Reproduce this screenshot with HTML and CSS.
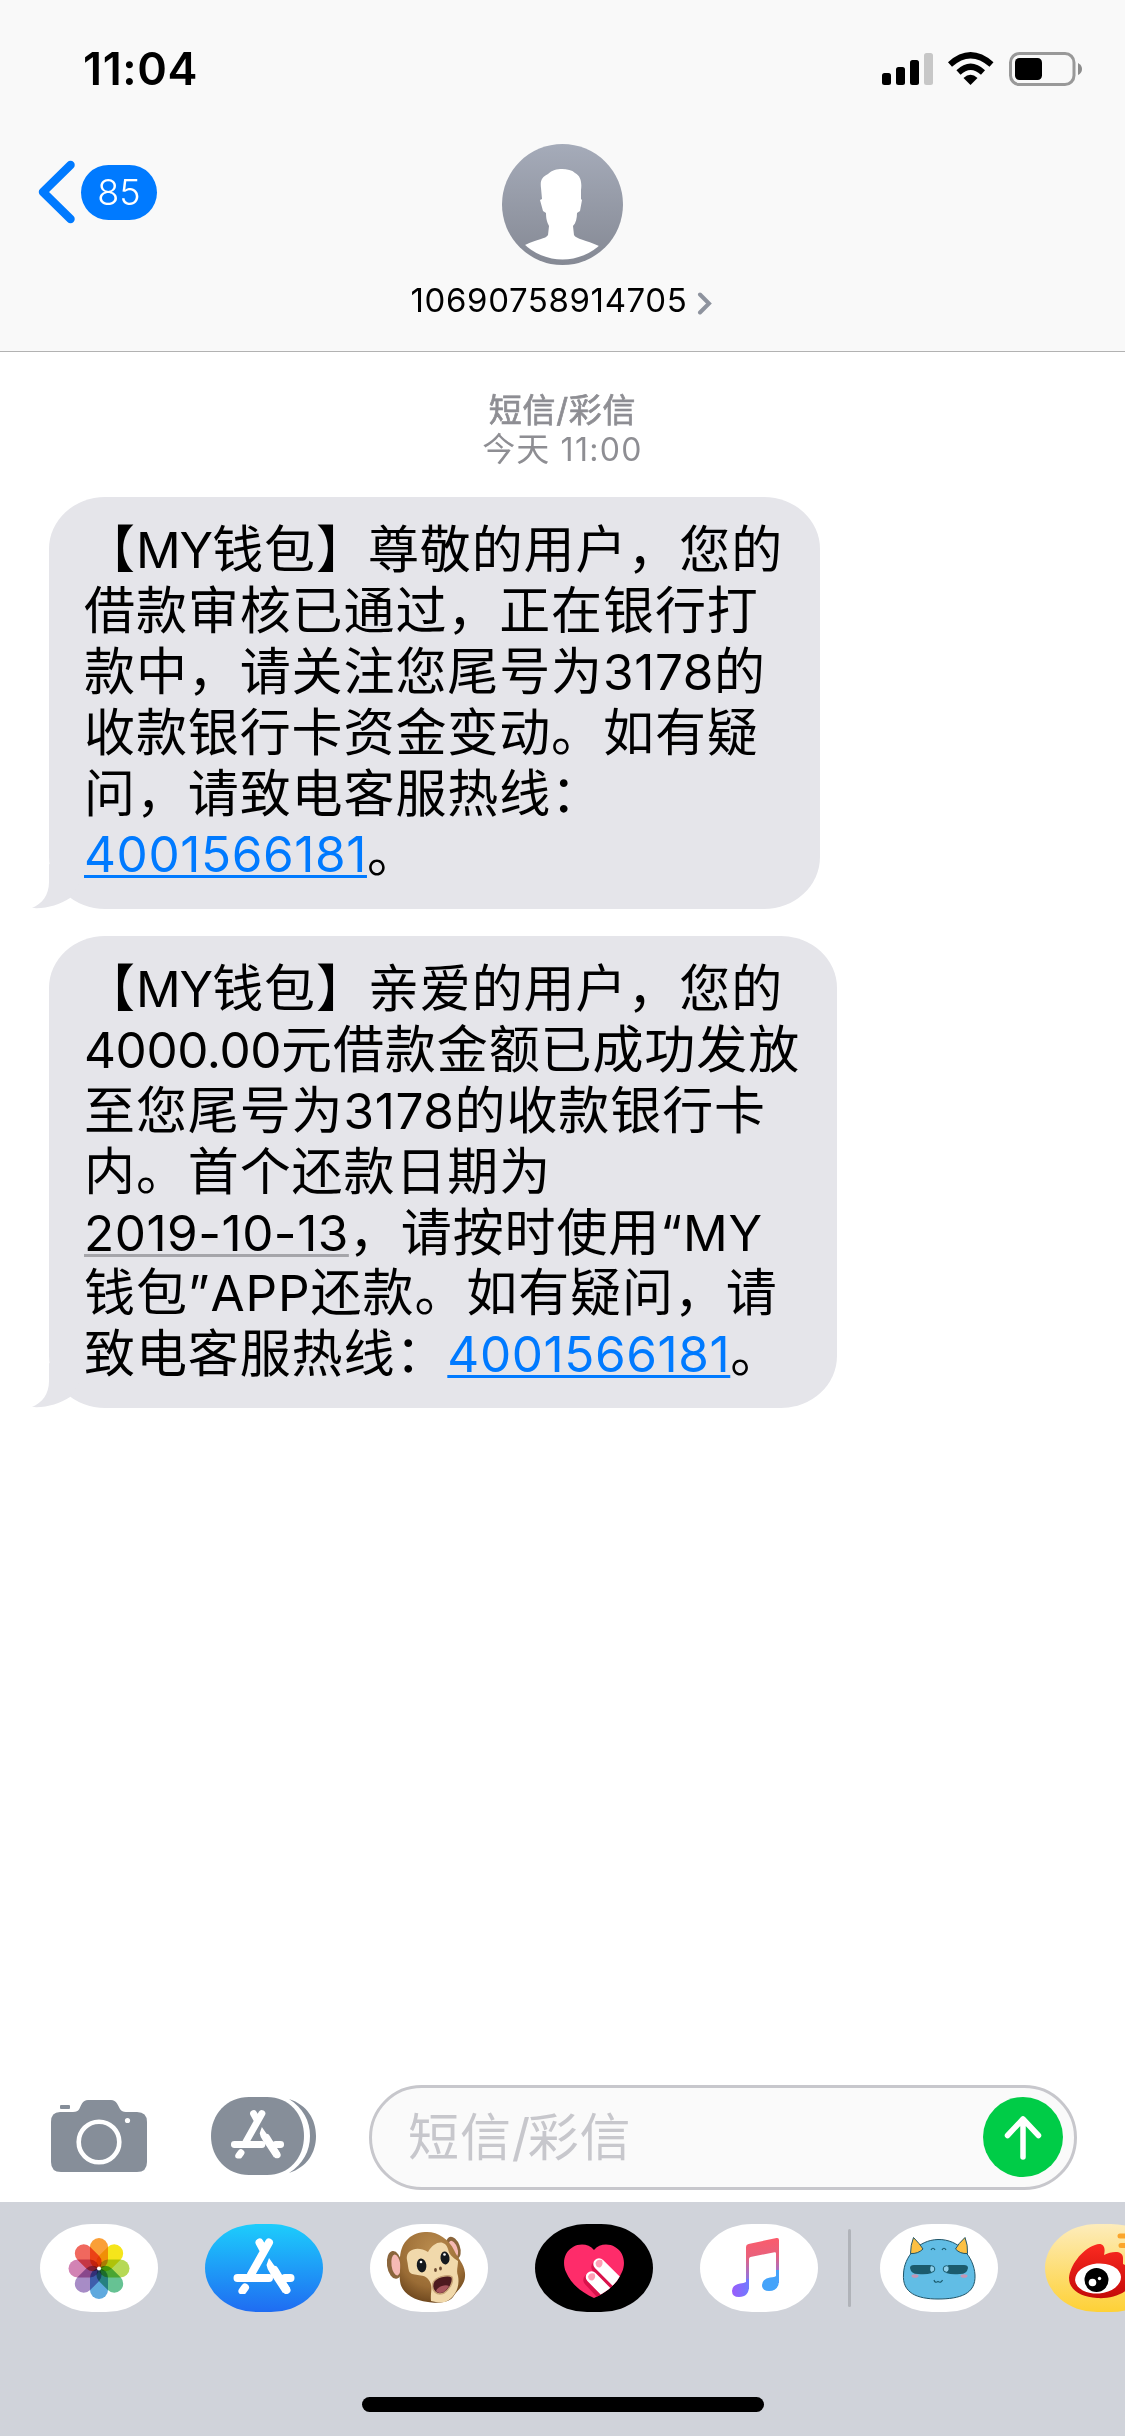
FILE: index.html
```html
<!DOCTYPE html>
<html lang="zh-CN">
<head>
  <meta charset="UTF-8" />
  <meta name="viewport" content="width=device-width, initial-scale=1.0"/>
  <title>短信/彩信</title>
  <link rel="stylesheet" href="styles.css">
</head>
<body>

  <svg class="defs" width="0" height="0">
    <defs>
      <symbol id="store" viewBox="0 0 62 56">
        <g fill="none" stroke="#fff" stroke-width="8" stroke-linecap="round">
          <path d="M36 4.5 L18 36.5 M26.5 4.5 L30 11" />
          <path d="M4.5 40 H36 M52 40 H57.5" />
          <path d="M41.5 32 L53.5 52 M12 49.5 L9.5 53" />
        </g>
        <path d="M36 20 L33.5 27 Q34 31 37.5 36 L50 55 L57 50 Z" fill="#fff" />
      </symbol>
      <symbol id="tail" viewBox="0 0 60 45">
        <path d="M17 0 V18 C17 31 10 40 0 44 C14 45 27 41 38 34 L52 12 Z" fill="#e5e5ea" />
      </symbol>
    </defs>
  </svg>

  <div class="header">
    <div class="status">
      <span class="time">11:04</span>
      <svg class="status-icons" width="204" height="36" viewBox="0 0 204 36">
        <rect x="1" y="21" width="9" height="12" rx="2.5" />
        <rect x="15" y="15" width="9" height="18" rx="2.5" />
        <rect x="29" y="8" width="9" height="25" rx="2.5" />
        <rect x="43" y="1" width="9" height="32" rx="2.5" fill="#c7c7c7" />
        <path d="M89.500 33 L82.500 26 Q89.500 19.500 96.500 26 Z" />
        <g fill="none" stroke="#000" stroke-width="6">
          <path d="M77.500 20.500 Q89.500 9 102 20.500" />
          <path d="M69 12.500 Q89.500 -6 110.500 12.500" />
        </g>
        <rect x="129.500" y="1.500" width="63.500" height="31" rx="9" fill="none" stroke="#999" stroke-width="3" />
        <rect x="134" y="6" width="27" height="22" rx="4.500" />
        <path d="M197 11 Q201 13 201 17 Q201 21 197 23 Z" fill="#8c8c8c" />
      </svg>
    </div>

    <div class="nav">
      <a class="back">
        <svg width="40" height="66" viewBox="0 0 40 66">
          <path d="M33.500 6 L6 33 L33.500 60" fill="none" stroke="#007aff" stroke-width="8.500" stroke-linecap="round" stroke-linejoin="round" />
        </svg>
        <span class="badge">85</span>
      </a>
      <div class="contact">
        <svg class="avatar" width="121" height="121" viewBox="0 0 121 121">
          <defs>
            <linearGradient id="avatarBg" x1="0" y1="0" x2="0" y2="1">
              <stop offset="0" stop-color="#a5abb9" />
              <stop offset="1" stop-color="#858994" />
            </linearGradient>
            <clipPath id="avatarClip"><circle cx="60.500" cy="60" r="55.500" /></clipPath>
          </defs>
          <circle cx="60.500" cy="60.500" r="60.500" fill="url(#avatarBg)" />
          <path clip-path="url(#avatarClip)" fill="#fff" d="M60 25 C65 25 70 26 73 29 C79 32 80 39 79 46 L79 55 L80 56 L78 67 L75 69 C75 74 74 79 71 82 L72 91 C74 95 84 96 97 102 L100 121 H20 L23 101 C35 95 44 95 46 91 L47 82 C45 78 44 75 44 69 L41 67 L38 56 L40 55 L39 44 C38 36 40 33 46 30 C50 26 55 25 60 25 Z" />
        </svg>
        <div class="name">
          <span>10690758914705</span>
          <svg width="16" height="24" viewBox="0 0 16 24">
            <path d="M3 3.500 L12 12.500 L3 21.500" fill="none" stroke="#8e939e" stroke-width="4" stroke-linecap="round" />
          </svg>
        </div>
      </div>
    </div>
  </div>

  <div class="messages">
    <div class="stamp">
      <p class="service">短信/彩信</p>
      <p>今天 <span class="num">11:00</span></p>
    </div>

    <div class="bubble first">
      <p>【<span class="en my">MY</span>钱包】尊敬的用户，您的</p>
      <p>借款审核已通过，正在银行打</p>
      <p>款中，请关注您尾号为<span class="en">3178</span>的</p>
      <p>收款银行卡资金变动。如有疑</p>
      <p class="short">问，请致电客服热线：</p>
      <p><a class="en phone">4001566181</a>。</p>
      <svg class="tail" width="60" height="45"><use href="#tail" /></svg>
    </div>

    <div class="bubble second">
      <p>【<span class="en my">MY</span>钱包】亲爱的用户，您的</p>
      <p><span class="en zeros">4000.00</span>元借款金额已成功发放</p>
      <p>至您尾号为<span class="en">3178</span>的收款银行卡</p>
      <p>内。首个还款日期为</p>
      <p class="short"><span class="en date">2019-10-13</span>，请按时使用<span class="en quote">“MY</span></p>
      <p>钱包<span class="en quote">”APP</span>还款。如有疑问，请</p>
      <p>致电客服热线：<a class="en phone">4001566181</a>。</p>
      <svg class="tail" width="60" height="45"><use href="#tail" /></svg>
    </div>
  </div>

  <div class="compose">
    <svg class="camera" width="96" height="74" viewBox="0 0 96 74">
      <rect x="9" y="5" width="10" height="4" rx="1" fill="#868e99" />
      <path fill="#868e99" d="M9 12 H22 C29 12 28 8 31 3.500 Q33 0 37 0 H60 Q64 0 66 3.500 C69 8 69 12 75 12 H86 Q96 12 96 22 V62 Q96 72 86 72 H10 Q0 72 0 62 V22 Q0 12 9 12 Z" />
      <circle cx="48" cy="42" r="20.300" fill="none" stroke="#fff" stroke-width="4.600" />
      <circle cx="76.500" cy="20.500" r="2.600" fill="#fff" />
    </svg>
    <svg class="apps" width="106" height="78" viewBox="0 0 106 78">
      <path fill="#868e99" d="M78 2 C96 8 105 22 105 39 C105 56 96 70 78 76 C92 67 99 54 99 39 C99 24 92 11 78 2 Z" />
      <path fill="#868e99" d="M38 0 H56 C78 0 93 17 93 39 C93 61 78 78 56 78 H38 C16 78 0 61 0 39 C0 17 16 0 38 0 Z" />
      <use href="#store" x="19.500" y="12.500" width="54" height="49" />
    </svg>
    <div class="field">
      <span class="placeholder">短信<span class="slash">/</span>彩信</span>
      <span class="send">
        <svg width="80" height="80" viewBox="0 0 80 80">
          <path d="M40 22 V60 M24.500 38.500 L40 22 L55.500 38.500" fill="none" stroke="#fff" stroke-width="5.500" stroke-linecap="round" stroke-linejoin="round" />
        </svg>
      </span>
    </div>
  </div>

  <div class="dock">
    <div class="strip">
      <!-- photos -->
      <svg class="pill" viewBox="0 0 118 88">
        <g class="petals">
          <rect x="50" y="14" width="18" height="30.500" rx="9" fill="#fa9f37" />
          <rect x="50" y="14" width="18" height="30.500" rx="9" fill="#f5e51b" transform="rotate(45 59 44.500)" />
          <rect x="50" y="14" width="18" height="30.500" rx="9" fill="#b6d957" transform="rotate(90 59 44.500)" />
          <rect x="50" y="14" width="18" height="30.500" rx="9" fill="#66c293" transform="rotate(135 59 44.500)" />
          <rect x="50" y="14" width="18" height="30.500" rx="9" fill="#5fa9de" transform="rotate(180 59 44.500)" />
          <rect x="50" y="14" width="18" height="30.500" rx="9" fill="#a78cc6" transform="rotate(225 59 44.500)" />
          <rect x="50" y="14" width="18" height="30.500" rx="9" fill="#d283b4" transform="rotate(270 59 44.500)" />
          <rect x="50" y="14" width="18" height="30.500" rx="9" fill="#f0685e" transform="rotate(315 59 44.500)" />
        </g>
        <circle cx="59" cy="44.500" r="2" fill="#fff" />
      </svg>

      <!-- app store -->
      <svg class="pill store" viewBox="0 0 118 88">
        <use href="#store" x="28" y="14" width="62" height="56" />
      </svg>

      <!-- animoji -->
      <svg class="pill" viewBox="0 0 118 88">
        <defs>
          <radialGradient id="fur" cx=".5" cy=".25" r=".75">
            <stop offset="0" stop-color="#b98b4e" />
            <stop offset=".7" stop-color="#9a6c35" />
            <stop offset="1" stop-color="#70491f" />
          </radialGradient>
        </defs>
        <ellipse cx="24.500" cy="41" rx="7.500" ry="14" fill="#8a653c" transform="rotate(-8 24 41)" />
        <ellipse cx="26" cy="41" rx="4.500" ry="10.500" fill="#f5b9b4" transform="rotate(-8 26 41)" />
        <ellipse cx="83.500" cy="24" rx="6.500" ry="11.500" fill="#8a653c" transform="rotate(-20 83 24)" />
        <ellipse cx="83" cy="25" rx="4" ry="8.500" fill="#f5b9b4" transform="rotate(-20 83 24)" />
        <path fill="url(#fur)" d="M55 8 C67 7 79 15 84 26 C88 35 94 39 95 49 C96 61 88 65 83 73 C78 80 64 79 58 78 C42 76 31 68 30 57 C29 51 31 44 30 36 C30 20 39 9 55 8 Z" />
        <path fill="#f1d9ab" d="M37 36 C35 26 47 21 58 28 C64 17 75 15 78 25 C79 30 82 33 88 37 C88 43 86 47 88 52 C90 62 86 72 77 77 C72 80 66 78 61 77 C60 68 64 62 58 55 C54 49 41 53 39 47 C38 44 38 40 37 36 Z" />
        <ellipse cx="51.500" cy="41.500" rx="4.800" ry="7" fill="#15191d" transform="rotate(-8 51 41)" />
        <ellipse cx="75" cy="34" rx="4.500" ry="6.500" fill="#15191d" transform="rotate(-8 75 34)" />
        <circle cx="51" cy="38" r="1.300" fill="#fff" />
        <circle cx="74.500" cy="30.500" r="1.300" fill="#fff" />
        <ellipse cx="65.500" cy="46" rx="1.400" ry="2" fill="#6b4a2f" />
        <ellipse cx="70.500" cy="44.500" rx="1.400" ry="2" fill="#6b4a2f" />
        <path fill="#4d1a1f" stroke="#c9a578" stroke-width="1.500" d="M63 59 C65 53 78 50 82 53 C84 58 79 66 74 69 C67 72 61 67 63 59 Z" />
        <path fill="#a6555c" d="M66 67 C68 62 76 60 79 62 C75 69 70 71 66 67 Z" />
      </svg>

      <!-- digital touch -->
      <svg class="pill touch" viewBox="0 0 118 88">
        <defs>
          <clipPath id="heart">
            <path d="M59 26 C54 20 45 19 38 23 C29 28 27 39 31 48 C36 60 46 68 59 74 C72 68 82 60 87 48 C91 39 89 28 80 23 C73 19 64 20 59 26 Z" />
          </clipPath>
        </defs>
        <g clip-path="url(#heart)">
          <rect width="118" height="88" fill="#fe2c6a" />
          <g stroke-linecap="round" stroke-width="11.500">
            <path d="M62 41 L88 69 M54 54 L80 82" stroke="#d9124b" transform="translate(0 2)" />
            <path d="M64 40 L92 68 M56.500 53 L84 81" stroke="#fff" />
          </g>
          <path d="M60.500 39 Q62 34.500 67 36 Q69 41 65 43.500 Q61 44 60.500 39 Z M53 52.500 Q54.500 48 59.500 49.500 Q61.500 54 57.500 56.500 Q53.500 57 53 52.500 Z" fill="#ff9fb6" />
        </g>
      </svg>

      <!-- music -->
      <svg class="pill" viewBox="0 0 118 88">
        <defs>
          <linearGradient id="note" gradientUnits="userSpaceOnUse" x1="58" y1="16" x2="62" y2="70">
            <stop offset="0" stop-color="#fa5c6c" />
            <stop offset=".3" stop-color="#e8617c" />
            <stop offset=".65" stop-color="#9a72d6" />
            <stop offset="1" stop-color="#5b90ff" />
          </linearGradient>
          <linearGradient id="noteHead" x1="0" y1="0" x2="1" y2="0">
            <stop offset="0" stop-color="#9a5cfb" />
            <stop offset="1" stop-color="#6f7bff" />
          </linearGradient>
        </defs>
        <path fill="url(#note)" d="M46 23 Q46 20.500 48.500 20 L76.500 14 Q79 13.500 79 16 V59 H76 V29.500 Q76 28 74.500 28.200 L50.500 33 Q49 33.400 49 35 V65 H46 Z" />
        <path fill="url(#noteHead)" d="M46 55 V58 Q44 59 40 59.500 Q32 61 32 67 Q32 73 39 73 Q49 73 49 62 V55 Z" />
        <path fill="#45a3fa" d="M76 46 V52 Q75 53 70 53.500 Q62 55 62 61 Q62 67 69 67 Q79 67 79 56 V46 Z" />
      </svg>

      <span class="divider"></span>

      <!-- blue monster stickers -->
      <svg class="pill" viewBox="0 0 118 88">
        <g stroke="#1f5468" stroke-width="1">
          <path fill="#61bde5" d="M58 15.500 C79 15 94 33 95 51 C96 70 80 75 58 75 C37 75 22 69 23.500 50 C24 33 38 16 58 15.500 Z" />
          <path fill="#fcc043" d="M33.500 13.500 Q40 20 43 25 Q38 30 30.500 29.500 Q30.500 21 33.500 13.500 Z" />
          <path fill="#fcc043" d="M85 13.500 Q78 20 75.500 25 Q80 30 87.500 29.500 Q88 21 85 13.500 Z" />
        </g>
        <circle cx="51.500" cy="45" r="3.300" fill="#8fd0ec" stroke="#1b5b6d" />
        <circle cx="66.500" cy="45" r="3.300" fill="#8fd0ec" stroke="#1b5b6d" />
        <path fill="#1b5b6d" d="M30 44 Q30 41 34 41 H51 Q49 46 52 49 Q46 51 38 50 Q31 50 30 44 Z" />
        <path fill="#1b5b6d" d="M88 44 Q88 41 84 41 H68 Q70 46 66 49 Q72 51 80 50 Q87 50 88 44 Z" />
        <ellipse cx="35" cy="52" rx="3.500" ry="1.800" fill="#c496b5" />
        <ellipse cx="84" cy="52" rx="3.500" ry="1.800" fill="#c496b5" />
        <path d="M51 26 Q53 22.500 55 26 M62 26 Q64 22.500 66 26 M54 56 Q55 59.500 58 57.500 Q61 59.500 62.500 56" fill="none" stroke="#1b5b6d" stroke-width="1.200" />
      </svg>

      <!-- weibo -->
      <svg class="pill weibo" viewBox="0 0 118 88">
        <defs>
          <linearGradient id="flame" x1="0" y1="0" x2="0" y2="1">
            <stop offset="0" stop-color="#fb2a20" />
            <stop offset="1" stop-color="#c40a09" />
          </linearGradient>
        </defs>
        <path fill="url(#flame)" d="M24 54 C25 42 36 26 50 21 C58 18 61 23 59 31 C67 27 78 26 78 34 V40 C90 45 92 54 86 62 C78 71 64 75 52 74 C36 73 24 66 24 54 Z" />
        <ellipse cx="53" cy="54.500" rx="23" ry="15" fill="#fff" transform="rotate(-5 53 54)" />
        <circle cx="51.500" cy="56" r="12" />
        <circle cx="47.500" cy="58.500" r="3.800" fill="#fff" />
        <circle cx="54.500" cy="54.500" r="1.700" fill="#fff" />
        <path d="M75 12 H90 M76 21.500 H90" stroke="#fba52c" stroke-width="5" stroke-linecap="round" />
      </svg>
    </div>
    <div class="home"></div>
  </div>

</body>
</html>
```
FILE: styles.css
```css
* {
  box-sizing: border-box;
}

body {
  font-family: "Inter", "Noto Sans CJK SC", sans-serif;
  background-color: #fff;
  color: #000;
  margin: 0;
  width: 1125px;
  height: 2436px;
  display: flex;
  flex-direction: column;
  overflow: hidden;
}

p {
  margin: 0;
}

svg {
  display: block;
  flex: none;
}

.defs {
  position: absolute;
}

/* header */
.header {
  height: 352px;
  background-color: #f9f9f9;
  border-bottom: 1px solid #b2b2b2;
}

.status {
  height: 132px;
  padding: 42px 40px 0 83px;
  display: flex;
  justify-content: space-between;
  align-items: flex-start;
}

.time {
  font-size: 45px;
  font-weight: 600;
  line-height: 54px;
  letter-spacing: 0.6px;
}

.status-icons {
  margin-top: 10px;
}

.nav {
  display: grid;
  grid-template-columns: 1fr auto 1fr;
  align-items: start;
}

.back {
  display: flex;
  align-items: center;
  gap: 4px;
  padding: 27px 0 0 37px;
}

.badge {
  width: 76px;
  height: 55px;
  border-radius: 28px;
  background-color: #007aff;
  color: #fff;
  font-size: 36px;
  font-weight: 300;
  line-height: 55px;
  text-align: center;
}

.contact {
  padding-top: 12px;
}

.avatar {
  margin: 0 auto;
}

.name {
  display: flex;
  align-items: center;
  gap: 10px;
  margin-top: 14px;
  padding-right: 1px;
  font-size: 33px;
  line-height: 42px;
  letter-spacing: 0.6px;
}

.name svg {
  margin-top: 5px;
}

/* conversation */
.messages {
  flex: 1;
}

.stamp {
  padding-top: 39px;
  height: 145px;
  text-align: center;
  color: #8e8e93;
  font-size: 33px;
  line-height: 39px;
  letter-spacing: 1px;
}

.stamp .service {
  letter-spacing: 0.7px;
  -webkit-text-stroke: 0.7px #8e8e93;
}

.num {
  font-size: 32px;
  letter-spacing: 1.3px;
}

.bubble {
  position: relative;
  margin-left: 49px;
  padding: 22px 0 0 35px;
  background-color: #e5e5ea;
  border-radius: 56px / 52px;
  font-size: 51px;
  letter-spacing: 0.9px;
  white-space: nowrap;
}

.bubble p {
  height: 61px;
  line-height: 61px;
}

.bubble p.short {
  height: 60px;
}

.first {
  width: 771px;
  height: 412px;
  margin-bottom: 27px;
}

.second {
  width: 788px;
  height: 472px;
}

.tail {
  position: absolute;
  left: -17px;
  bottom: 0;
}

.en {
  font-size: 49.5px;
  letter-spacing: 0.6px;
}

.my {
  letter-spacing: -1px;
}

.zeros {
  letter-spacing: -0.4px;
}

.quote {
  letter-spacing: 0.9px;
}

.phone {
  color: #007aff;
  text-decoration: underline;
  text-decoration-thickness: 3px;
  text-underline-offset: 3px;
  text-decoration-skip-ink: none;
}

.date {
  letter-spacing: 0.5px;
  text-decoration: underline #a5a5aa 3px;
  text-underline-offset: 3px;
  text-decoration-skip-ink: none;
}

/* input row */
.compose {
  height: 117px;
  display: flex;
  align-items: flex-start;
  padding-left: 51px;
}

.camera {
  margin-top: 15px;
}

.apps {
  margin: 12px 52px 0 64px;
}

.field {
  width: 708px;
  height: 105px;
  border: 3px solid #c7c7cc;
  border-radius: 53px;
  background-color: #fafafa;
  display: flex;
  align-items: center;
  justify-content: space-between;
  padding: 0 11px 0 36px;
}

.placeholder {
  font-size: 51px;
  line-height: 60px;
  letter-spacing: 0.9px;
  color: #c7c7cc;
}

.slash {
  letter-spacing: -2.5px;
}

.send {
  width: 80px;
  height: 80px;
  border-radius: 50%;
  background-color: #00cc47;
  margin-bottom: 2px;
}

/* app strip */
.dock {
  height: 234px;
  background-color: #d0d3da;
}

.strip {
  display: flex;
  align-items: center;
  gap: 47px;
  height: 132px;
  padding-left: 40px;
  overflow: hidden;
}

.pill {
  width: 118px;
  height: 88px;
  border-radius: 52px / 44px;
  background-color: #fff;
}

.petals {
  isolation: isolate;
}

.petals rect {
  mix-blend-mode: multiply;
}

.pill.store {
  background: linear-gradient(#1dcdfc, #1f6cf2);
}

.pill.touch {
  background-color: #000;
}

.pill.weibo {
  background: linear-gradient(#fdecbb, #fed136);
}

.divider {
  flex: none;
  width: 3px;
  height: 78px;
  margin: 0 -18px 0 -17px;
  border-radius: 2px;
  background-color: #b0b3b9;
}

.home {
  width: 402px;
  height: 15px;
  margin: 63px auto 0;
  border-radius: 8px;
  background-color: #000;
}
```
